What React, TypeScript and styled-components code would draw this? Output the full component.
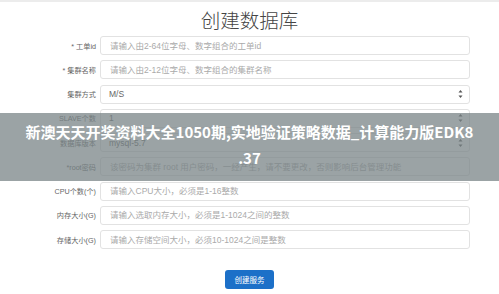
import React from 'react';
import styled, { createGlobalStyle } from 'styled-components';

const GlobalStyle = createGlobalStyle`
  html, body {
    margin: 0;
    padding: 0;
    background: #fff;
  }
  body {
    font-family: "Liberation Sans", "Noto Sans CJK SC", sans-serif;
  }
`;

const Page = styled.div`
  position: relative;
  width: 499px;
  height: 294px;
  overflow: hidden;
  border-top: 2px solid #ececec;
  box-sizing: border-box;
  background: #fff;
`;

const Title = styled.h1`
  margin: 0;
  height: 34px;
  display: flex;
  align-items: center;
  justify-content: center;
  font-family: "Noto Sans CJK SC", sans-serif;
  font-weight: 300;
  font-size: 19.5px;
  color: #444;
`;

const Form = styled.div`
  display: flex;
  flex-direction: column;
  gap: 5.25px;
`;

const Row = styled.div`
  display: grid;
  grid-template-columns: 100px 370px;
  align-items: center;
  height: 19px;
`;

const Label = styled.label`
  text-align: right;
  padding-right: 4px;
  font-family: "Liberation Sans", "Noto Sans CJK SC", sans-serif;
  font-size: 7.2px;
  color: #666;
  white-space: nowrap;
`;

const Field = styled.input`
  box-sizing: border-box;
  width: 370px;
  height: 19px;
  margin: 0;
  padding: 0 9px;
  border: 1px solid #e2e2e2;
  border-radius: 3px;
  font-family: "Liberation Sans", "Noto Sans CJK SC", sans-serif;
  font-size: 8.5px;
  color: #555;
  outline: none;
  &::placeholder {
    color: #aaa;
  }
`;

const Select = styled.div`
  box-sizing: border-box;
  width: 370px;
  height: 19px;
  display: flex;
  align-items: center;
  justify-content: space-between;
  padding: 0 6px 0 8px;
  border: 1px solid #e2e2e2;
  border-radius: 3px;
  font-family: "Liberation Sans", "Noto Sans CJK SC", sans-serif;
  font-size: 8.5px;
  color: #666;
`;

const Footer = styled.div`
  display: flex;
  justify-content: center;
  padding-top: 21px;
`;

const Button = styled.button`
  width: 49px;
  height: 19px;
  border: none;
  border-radius: 3px;
  background: #1c70c8;
  color: #fff;
  font-family: "Noto Sans CJK SC", sans-serif;
  font-size: 7.5px;
  padding: 0;
`;

const Banner = styled.div`
  position: absolute;
  left: 0;
  right: 0;
  top: 111px;
  height: 68px;
  background: rgba(120, 131, 134, 0.74);
  display: flex;
  align-items: flex-start;
  justify-content: center;
  padding: 6px 20px 0 20px;
  box-sizing: border-box;
`;

const BannerText = styled.div`
  color: #fff;
  font-family: "Noto Sans CJK SC", sans-serif;
  font-weight: 700;
  font-size: 15px;
  line-height: 26px;
  text-align: center;
`;

const Arrows = () => (
  <svg width="5" height="10" viewBox="0 0 5 10">
    <path d="M2.5 1 L4.5 3.5 L0.5 3.5 Z" fill="#555" />
    <path d="M2.5 9 L4.5 6.5 L0.5 6.5 Z" fill="#555" />
  </svg>
);

type Item =
  | { label: string; kind: 'input'; placeholder: string }
  | { label: string; kind: 'select'; value: string };

const items: Item[] = [
  { label: '* 工单id', kind: 'input', placeholder: '请输入由2-64位字母、数字组合的工单id' },
  { label: '* 集群名称', kind: 'input', placeholder: '请输入由2-12位字母、数字组合的集群名称' },
  { label: '集群方式', kind: 'select', value: 'M/S' },
  { label: 'SLAVE个数', kind: 'select', value: '1' },
  { label: '数据库版本', kind: 'select', value: 'mysql-5.7' },
  { label: '*root密码', kind: 'input', placeholder: '该密码为集群 root 用户密码，一经产生，请不要更改，否则影响后台管理功能' },
  { label: 'CPU个数(个)', kind: 'input', placeholder: '请输入CPU大小，必须是1-16整数' },
  { label: '内存大小(G)', kind: 'input', placeholder: '请输入选取内存大小，必须是1-1024之间的整数' },
  { label: '存储大小(G)', kind: 'input', placeholder: '请输入存储空间大小，必须10-1024之间是整数' },
];

export default function App() {
  return (
    <>
      <GlobalStyle />
      <Page>
        <Title>创建数据库</Title>
        <Form>
          {items.map(item => (
            <Row key={item.label}>
              <Label>{item.label}</Label>
              {item.kind === 'input' ? (
                <Field placeholder={item.placeholder} readOnly />
              ) : (
                <Select>
                  <span>{item.value}</span>
                  <Arrows />
                </Select>
              )}
            </Row>
          ))}
        </Form>
        <Footer>
          <Button>创建服务</Button>
        </Footer>
        <Banner>
          <BannerText>
            新澳天天开奖资料大全1050期,实地验证策略数据_计算能力版EDK8
            <br />
            .37
          </BannerText>
        </Banner>
      </Page>
    </>
  );
}
